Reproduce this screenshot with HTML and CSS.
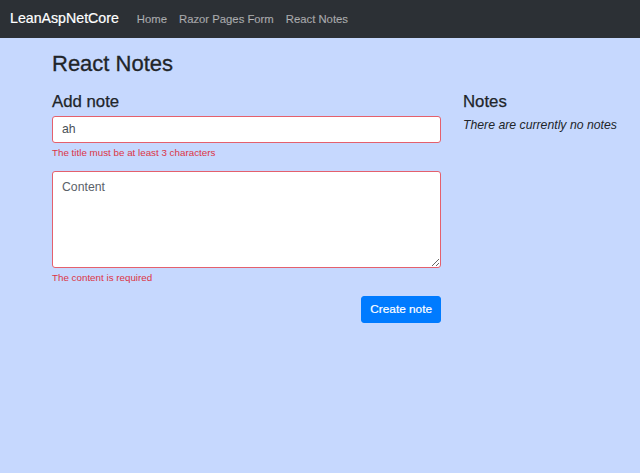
FILE: index.html
```html
<!DOCTYPE html>
<html>
<head>
<meta charset="utf-8">
<link rel="stylesheet" href="styles.css">
</head>
<body>
<nav class="navbar">
  <a class="brand" href="#">LeanAspNetCore</a>
  <ul class="nav">
    <li><a href="#">Home</a></li>
    <li><a href="#">Razor Pages Form</a></li>
    <li><a href="#">React Notes</a></li>
  </ul>
</nav>
<main class="container">
  <h1 class="title">React Notes</h1>
  <div class="row">
    <section class="col-main">
      <h3 class="subtitle">Add note</h3>
      <form class="form">
        <div class="group">
          <input class="control invalid" type="text" value="ah" placeholder="Title">
          <div class="feedback">The title must be at least 3 characters</div>
        </div>
        <div class="group group-last">
          <textarea class="control area invalid" placeholder="Content"></textarea>
          <div class="feedback">The content is required</div>
        </div>
        <div class="actions">
          <button type="button" class="btn">Create note</button>
        </div>
      </form>
    </section>
    <aside class="col-side">
      <h3 class="subtitle">Notes</h3>
      <p class="empty">There are currently no notes</p>
    </aside>
  </div>
</main>
</body>
</html>
```
FILE: styles.css
```css
html, body {
  margin: 0;
  padding: 0;
}
body {
  background: #c6d8fe;
  font-family: "Liberation Sans", Arial, Helvetica, sans-serif;
  font-size: 12.25px;
  line-height: 1.5;
  color: #212529;
  height: 473px;
}
.navbar {
  background: #2c3035;
  height: 38px;
  display: flex;
  align-items: center;
  padding: 0 10px;
  box-sizing: border-box;
}
.brand {
  color: #fff;
  text-decoration: none;
  font-size: 14.2px;
  margin-right: 12px;
  -webkit-text-stroke: 0.2px #fff;
}
.nav {
  list-style: none;
  margin: 0;
  padding: 0;
  display: flex;
}
.nav a {
  display: block;
  padding: 0 6px;
  color: rgba(255, 255, 255, 0.55);
  text-decoration: none;
  font-size: 11.3px;
  -webkit-text-stroke: 0.15px rgba(255, 255, 255, 0.55);
}
.container {
  padding: 0 15px 0 52px;
}
.title {
  margin: 0;
  padding-top: 13px;
  font-size: 22px;
  font-weight: normal;
  line-height: 1.2;
  margin-bottom: 15px;
  -webkit-text-stroke: 0.3px #212529;
}
.row {
  display: flex;
  gap: 22px;
}
.col-main {
  width: 389px;
  flex: none;
}
.col-side {
  flex: 1;
}
.subtitle {
  margin: 0;
  font-size: 16.8px;
  font-weight: normal;
  line-height: 1.2;
  margin-bottom: 3px;
  -webkit-text-stroke: 0.25px #212529;
}
.group {
  margin-bottom: 11px;
}
.group-last {
  margin-bottom: 10px;
}
.control {
  display: block;
  width: 100%;
  box-sizing: border-box;
  height: 27px;
  padding: 4px 9px;
  font-family: inherit;
  font-size: 12.25px;
  line-height: 1.5;
  color: #495057;
  background: #fff;
  border: 1px solid #ced4da;
  border-radius: 3px;
  margin: 0;
}
.control::placeholder {
  color: #5a6169;
  opacity: 1;
}
.control.invalid {
  border-color: #e4606d;
}
.area {
  height: 97px;
  resize: vertical;
  padding-top: 6px;
}
.feedback {
  color: #dc3545;
  font-size: 9.8px;
  line-height: 1.5;
  margin-top: 3px;
}
.actions {
  display: flex;
  justify-content: flex-end;
}
.btn {
  font-family: inherit;
  font-size: 11.8px;
  line-height: 1.5;
  color: #fff;
  background: #007bff;
  border: 1px solid #007bff;
  border-radius: 3px;
  height: 27px;
  padding: 0 8px;
  cursor: pointer;
  -webkit-text-stroke: 0.2px #fff;
}
.empty {
  margin: 0;
  font-style: italic;
  font-size: 12.25px;
}
```
